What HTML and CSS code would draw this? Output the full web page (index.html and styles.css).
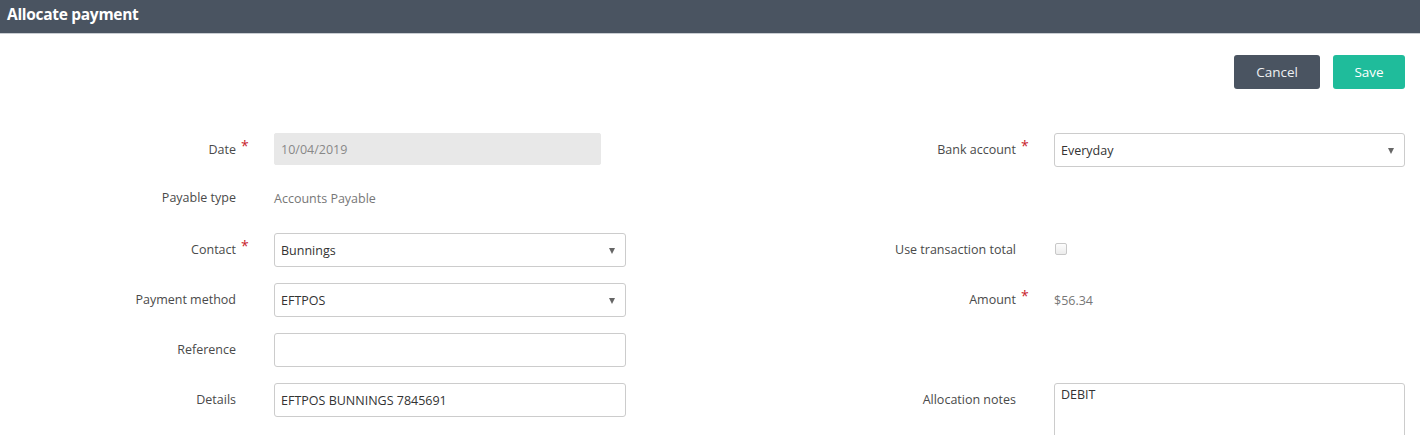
FILE: index.html
```html
<!DOCTYPE html>
<html lang="en">
<head>
<meta charset="utf-8">
<title>Allocate payment</title>
<link rel="stylesheet" href="styles.css">
</head>
<body>
<header class="topbar">
  <h1 class="title">Allocate payment</h1>
</header>
<div class="toolbar">
  <button class="btn btn-cancel" type="button">Cancel</button>
  <button class="btn btn-save" type="button">Save</button>
</div>
<form class="form">
  <!-- row 1 -->
  <div class="label">Date</div>
  <div class="req">*</div>
  <div class="field"><div class="input input-disabled input-date">10/04/2019</div></div>
  <div class="label">Bank account</div>
  <div class="req">*</div>
  <div class="field"><div class="input select">Everyday<span class="caret"></span></div></div>

  <!-- row 2 -->
  <div class="label label-up">Payable type</div>
  <div class="req"></div>
  <div class="field field-up"><span class="value">Accounts Payable</span></div>
  <div class="label"></div>
  <div class="req"></div>
  <div class="field"></div>

  <!-- row 3 -->
  <div class="label">Contact</div>
  <div class="req">*</div>
  <div class="field"><div class="input select">Bunnings<span class="caret"></span></div></div>
  <div class="label">Use transaction total</div>
  <div class="req"></div>
  <div class="field"><span class="checkbox"></span></div>

  <!-- row 4 -->
  <div class="label">Payment method</div>
  <div class="req"></div>
  <div class="field"><div class="input select">EFTPOS<span class="caret"></span></div></div>
  <div class="label">Amount</div>
  <div class="req">*</div>
  <div class="field"><span class="value">$56.34</span></div>

  <!-- row 5 -->
  <div class="label">Reference</div>
  <div class="req"></div>
  <div class="field"><div class="input"></div></div>
  <div class="label"></div>
  <div class="req"></div>
  <div class="field"></div>

  <!-- row 6 -->
  <div class="label">Details</div>
  <div class="req"></div>
  <div class="field"><div class="input">EFTPOS BUNNINGS 7845691</div></div>
  <div class="label">Allocation notes</div>
  <div class="req"></div>
  <div class="field field-top"><div class="textarea">DEBIT</div></div>
</form>
</body>
</html>
```

FILE: styles.css
```css
html {
  overflow: hidden;
}

html, body {
  margin: 0;
  padding: 0;
  background: #ffffff;
  font-family: "Open Sans", "Noto Sans", "DejaVu Sans", sans-serif;
  font-size: 12.5px;
  color: #4a4a4a;
}

.topbar {
  height: 33px;
  background: #4a5461;
  border-bottom: 1px solid #c9cdd2;
  display: flex;
  align-items: center;
  padding-left: 7px;
}

.title {
  margin: 0;
  margin-top: -6px;
  font-size: 15.5px;
  font-weight: 700;
  color: #ffffff;
  letter-spacing: -0.3px;
}

.toolbar {
  display: flex;
  justify-content: flex-end;
  gap: 13px;
  padding: 21px 15px 0 0;
}

.btn {
  height: 34px;
  border: none;
  border-radius: 3px;
  font-family: "Open Sans", "Noto Sans", sans-serif;
  font-size: 13.5px;
  color: #ffffff;
  padding: 0;
  cursor: pointer;
}

.btn-cancel {
  width: 86px;
  background: #4a5461;
  color: #eef0f2;
}

.btn-save {
  width: 72px;
  background: #1fbc9b;
}

.form {
  display: grid;
  grid-template-columns: 236px 38px 352px 390px 38px 351px;
  grid-auto-rows: minmax(34px, auto);
  align-items: start;
  row-gap: 16px;
  margin-top: 44px;
}

.label {
  text-align: right;
  line-height: 34px;
  color: #4a4a4a;
  white-space: nowrap;
}

.label-up {
  line-height: 30px;
}

.req {
  color: #c8232c;
  font-size: 14px;
  line-height: 26px;
  padding-left: 5px;
}

.field {
  display: flex;
  align-items: center;
  height: 34px;
}

.field-up {
  height: 30px;
}

.field-top {
  align-items: flex-start;
  height: auto;
}

.value {
  color: #777;
}

.input {
  box-sizing: border-box;
  width: 100%;
  height: 34px;
  border: 1px solid #cccccc;
  border-radius: 3px;
  background: #ffffff;
  padding: 0 6px;
  display: flex;
  align-items: center;
  color: #333;
  position: relative;
}

.input-date {
  width: 327px;
  height: 32px;
  align-self: flex-start;
}

.input-disabled {
  background: #e8e8e8;
  border-color: #e8e8e8;
  color: #888;
  border-radius: 2px;
}

.select {
  padding-right: 24px;
}

.caret {
  position: absolute;
  right: 10px;
  top: 50%;
  margin-top: -2px;
  width: 0;
  height: 0;
  border-left: 3.5px solid transparent;
  border-right: 3.5px solid transparent;
  border-top: 6px solid #666;
}

.checkbox {
  box-sizing: border-box;
  width: 12px;
  height: 12px;
  margin-left: 1px;
  margin-top: -2px;
  border: 1px solid #c8c8c8;
  border-radius: 2px;
  background: linear-gradient(#fdfdfd, #ececec);
}

.textarea {
  box-sizing: border-box;
  flex: none;
  width: 100%;
  height: 90px;
  border: 1px solid #cccccc;
  border-radius: 3px;
  padding: 3px 6px;
  color: #333;
  line-height: 16px;
}
```
